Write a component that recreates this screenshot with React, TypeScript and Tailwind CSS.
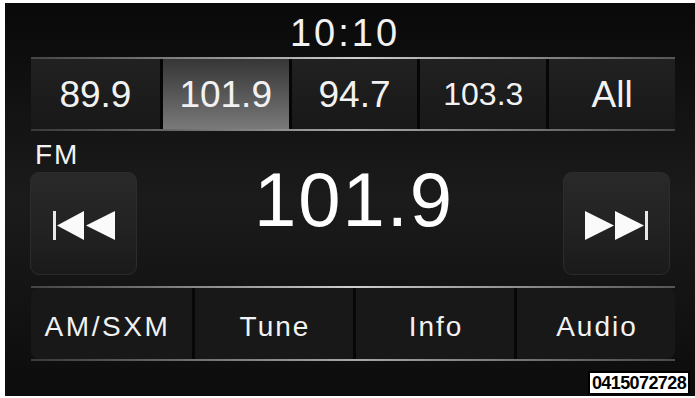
const presets = [
  { label: '89.9', size: 'text-[37px]' },
  { label: '101.9', size: 'text-[37px]', active: true },
  { label: '94.7', size: 'text-[37px]' },
  { label: '103.3', size: 'text-[32px]' },
  { label: 'All', size: 'text-[37px]' },
];

const actions = ['AM/SXM', 'Tune', 'Info', 'Audio'];

function Line({ dim }: { dim?: boolean }) {
  return (
    <div
      className={
        dim
          ? 'h-[2px] bg-linear-to-r from-[#3a3a3a] via-[#a8a8a8] to-[#4a4a4a]'
          : 'h-[2px] bg-linear-to-r from-[#444] via-[#cfcfcf] to-[#555]'
      }
    />
  );
}

function SeekButton({ dir }: { dir: 'prev' | 'next' }) {
  return (
    <div className="w-[107px] h-[103px] rounded-[9px] border border-[#2c2c2c] bg-linear-to-b from-[#292929] via-[#232323] to-[#1a1a1a] flex items-center justify-center pt-[4px]">
      {dir === 'prev' ? (
        <svg width="62" height="29" viewBox="0 0 62 29">
          <rect x="0" y="0" width="3" height="29" fill="#e8e8e8" />
          <polygon points="4,14.5 31,0 31,29" fill="#fafafa" />
          <polygon points="33,14.5 62,0 62,29" fill="#fafafa" />
        </svg>
      ) : (
        <svg width="63" height="29" viewBox="0 0 63 29">
          <polygon points="0,0 29,14.5 0,29" fill="#fafafa" />
          <polygon points="30,0 59,14.5 30,29" fill="#fafafa" />
          <rect x="60" y="0" width="3" height="29" fill="#e8e8e8" />
        </svg>
      )}
    </div>
  );
}

export default function App() {
  return (
    <div className="w-[695px] h-[398px] bg-white pt-[3px] pl-[5px] font-['Liberation_Sans',Arial,sans-serif] overflow-hidden">
      <div className="w-[690px] h-[393px] bg-linear-to-b from-[#090909] via-[#1b1b1b] to-[#0c0c0c] text-[#f2f2f2] flex flex-col">
        {/* Clock */}
        <div className="pt-[11px] pb-[5px] pr-[10px] text-center text-[38px] leading-none tracking-[3px]">
          10:10
        </div>

        {/* Presets */}
        <div className="ml-[26px] w-[644px]">
          <Line />
          <div className="h-[70px] flex bg-[#1c1c1c] rounded-r-[8px]">
            {presets.map((p, i) => (
              <div key={p.label} className="flex flex-1">
                {i > 0 && <div className="w-[3px] bg-[#060606]" />}
                <div
                  className={
                    'flex-1 flex items-center justify-center leading-none ' +
                    p.size +
                    (p.active
                      ? ' bg-linear-to-b from-[#363636] to-[#7a7a7a]'
                      : ' bg-linear-to-b from-[#212121] to-[#181818]')
                  }
                >
                  {p.label}
                </div>
              </div>
            ))}
          </div>
          <Line dim />
        </div>

        {/* Station */}
        <div className="mt-[10px] ml-[25px] w-[640px] flex justify-between">
          <div className="flex flex-col">
            <div className="pl-[5px] text-[28px] leading-none tracking-[2px]">FM</div>
            <div className="mt-[3px]">
              <SeekButton dir="prev" />
            </div>
          </div>
          <div className="pt-[21px] pl-[8px] text-[76px] leading-none tracking-[2px] text-white">
            101.9
          </div>
          <div className="pt-[31px]">
            <SeekButton dir="next" />
          </div>
        </div>

        {/* Actions */}
        <div className="mt-[11px] ml-[26px] w-[644px]">
          <Line />
          <div className="h-[71px] flex bg-[#181818] rounded-[8px]">
            {actions.map((a, i) => (
              <div key={a} className="flex flex-1">
                {i > 0 && <div className="w-[3px] bg-[#070707]" />}
                <div
                  className={
                    'flex-1 flex items-center justify-center pt-[6px] text-[28px] leading-none ' +
                    (i === 0 ? 'pr-[8px] tracking-[2.6px]' : 'pl-[2px] tracking-[2px]')
                  }
                >
                  {a}
                </div>
              </div>
            ))}
          </div>
          <Line dim />
        </div>

        {/* Figure number */}
        <div className="mt-[10px] flex justify-end pr-[5px]">
          <div className="h-[24px] w-[102px] bg-white border-2 border-black flex items-center justify-center text-black font-bold text-[18px] leading-none tracking-[-0.6px]">
            0415072728
          </div>
        </div>
      </div>
    </div>
  );
}
